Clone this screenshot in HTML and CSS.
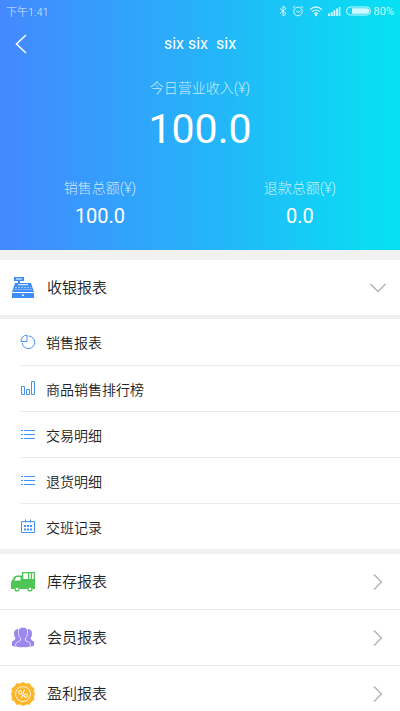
FILE: index.html
```html
<!DOCTYPE html>
<html lang="zh-CN">
<head>
<meta charset="utf-8">
<meta name="viewport" content="width=device-width, initial-scale=1">
<title>six six six</title>
<link rel="stylesheet" href="styles.css">
</head>
<body>
<div class="app">
  <header class="hero">
    <div class="status">
      <span class="time">下午1:41</span>
      <div class="indicators">
        <svg width="8" height="12" viewBox="0 0 8 12" fill="none" stroke="currentColor"><path d="M1 3.5l6 5-3 2.5V1l3 2.500-6 5"/></svg>
        <svg width="12" height="12" viewBox="0 0 12 12" fill="none" stroke="currentColor"><circle cx="6" cy="6.500" r="4.300"/><path d="M4 5.500l2 2 2.500-1.500M.8 3L3 1M11.200 3L9 1"/></svg>
        <svg width="14" height="12" viewBox="0 0 14 12" fill="none" stroke="currentColor" stroke-width="1.3"><path d="M1 4.500q6-5 12 0M3 6.700q4-3.200 8 0M5 8.800q2-1.600 4 0"/><circle cx="7" cy="10" r=".6" fill="currentColor"/></svg>
        <svg width="13" height="12" viewBox="0 0 13 12" fill="currentColor"><path d="M0 8.500h2V11H0zM2.700 7h2v4h-2zM5.400 5.300h2V11h-2zM8.100 3.600h2V11h-2zM10.800 2h1.600v9h-1.600z"/></svg>
        <svg width="25" height="12" viewBox="0 0 25 12"><rect x=".5" y="2" width="24" height="8" rx="4" fill="none" stroke="currentColor"/><path d="M6 3.200h14.500a2.800 2.800 0 0 1 0 5.600H6z" fill="currentColor"/></svg>
        <span class="battery">80%</span>
      </div>
    </div>
    <div class="titlebar">
      <button class="back" type="button" aria-label="返回"><svg width="12" height="20" viewBox="0 0 12 20" fill="none" stroke="currentColor" stroke-width="1.5"><path d="M11 1L1.500 10 11 19"/></svg></button>
      <h1 class="title">six six&nbsp; six</h1>
    </div>
    <div class="today">
      <div class="label">今日营业收入(¥)</div>
      <div class="amount">100.0</div>
    </div>
    <div class="totals">
      <div class="total"><div class="label">销售总额(¥)</div><div class="value">100.0</div></div>
      <div class="total"><div class="label">退款总额(¥)</div><div class="value">0.0</div></div>
    </div>
  </header>
  <main class="menu">
    <button class="row" type="button" aria-expanded="true">
      <svg class="icon blue" width="24" height="24" viewBox="0 0 24 24" fill="currentColor"><path fill-rule="evenodd" d="M3 1h10v4H9v2h11l3 9H1L4 7h3V5H3zM5 2.400v1h6v-1zM7 8.300v1h10v-1z"/><path d="M1 17h22v5H1z"/><path d="M4 11.500h16M3.500 13.500h17" fill="none" stroke="#fff" stroke-opacity=".5" stroke-dasharray="2 1"/><path d="M11 18.500h2V20h-2z" fill="#fff"/></svg>
      <span class="name">收银报表</span>
      <svg class="chevron" width="18" height="18" viewBox="0 0 18 18"><path d="M1.500 5L9 12.500 16.500 5"/></svg>
    </button>
    <nav class="sub">
      <a class="item" href="#sales"><svg class="small" width="16" height="16" viewBox="0 0 16 16"><path d="M8.500 2A6.300 6.300 0 1 1 2.200 9M7 1v6.500H1A6.300 6.300 0 0 1 7 1z"/></svg><span>销售报表</span></a>
      <a class="item" href="#ranking"><svg class="small" width="16" height="16" viewBox="0 0 16 16"><path d="M1.500 5.500h3v8h-3zM6.500 8.500h3v5h-3zM11.500 .5h3v13h-3z"/></svg><span>商品销售排行榜</span></a>
      <a class="item" href="#trades"><svg class="small" width="16" height="16" viewBox="0 0 16 16"><path d="M4 3.500h11M4 7.500h11M4 11.500h11M1 3.500h2M1 7.500h2M1 11.500h2"/></svg><span>交易明细</span></a>
      <a class="item" href="#returns"><svg class="small" width="16" height="16" viewBox="0 0 16 16"><path d="M4 3.500h11M4 7.500h11M4 11.500h11M1 3.500h2M1 7.500h2M1 11.500h2"/></svg><span>退货明细</span></a>
      <a class="item" href="#shifts"><svg class="small" width="16" height="16" viewBox="0 0 16 16"><path d="M1.500 2.500h13v11h-13zM5.500 .5v3M10.500 .5v3"/><path stroke-width="2" stroke-dasharray="2 1" d="M4 7h8M4 10.500h8"/></svg><span>交班记录</span></a>
    </nav>
    <button class="row" type="button">
      <svg class="icon green" width="24" height="24" viewBox="0 0 24 24" fill="currentColor"><path fill-rule="evenodd" d="M11 2h13v17h-2.200a3 3 0 0 0-5.600 0H8.800a3 3 0 0 0-5.600 0H0v-7l3-5q1-1.500 3-1.500h5zM12.300 3.300V9H17V3.300zM18.300 3.300V9h1.500V3.300zM21 3.300V9h1.700V3.300zM5.500 7L3 10.500h6.500V7z"/><circle cx="6" cy="19" r="2.600"/><circle cx="19" cy="19" r="2.600"/><circle cx="6" cy="19" r="1.300" fill="#fff"/><circle cx="19" cy="19" r="1.300" fill="#fff"/></svg>
      <span class="name">库存报表</span>
      <svg class="chevron" width="18" height="18" viewBox="0 0 18 18"><path d="M5 1.500L12.500 9 5 16.500"/></svg>
    </button>
    <button class="row" type="button">
      <svg class="icon purple" width="24" height="24" viewBox="0 0 24 24" fill="currentColor"><path d="M7.500 3Q3 3 3 7.500q0 3 1.500 5L3 14.500l-2 1V19q0 1.500 5 1.500L10 15zM16.500 3Q21 3 21 7.500q0 3-1.500 5l1.500 2 2 1V19q0 1.500-5 1.500L14 15z"/><path stroke="#fff" stroke-width=".7" d="M12 1.300c-3.800 0-5 2.700-4.500 6 .2 2.500 1 3.800 2.200 5.200v1.800c-1.700 1.500-4.700 1.400-5.200 4.200-.4 2.700 1.500 3 7.500 3s7.900-.3 7.500-3c-.5-2.800-3.500-2.700-5.200-4.200v-1.800c1.200-1.400 2-2.700 2.200-5.200.5-3.300-.7-6-4.500-6z"/></svg>
      <span class="name">会员报表</span>
      <svg class="chevron" width="18" height="18" viewBox="0 0 18 18"><path d="M5 1.500L12.500 9 5 16.500"/></svg>
    </button>
    <button class="row" type="button">
      <svg class="icon orange" width="24" height="24" viewBox="0 0 24 24" fill="currentColor"><path d="M12 0l3 1.500 3.700-.3 1.700 3 3 2-.4 3.300L24 12l-1 2.500.4 3.300-3 2-1.700 3-3.700-.3L12 24l-3-1.500-3.700.3-1.700-3-3-2L1 14.500 0 12l1-2.500L.6 6.200l3-2 1.700-3L9 1.500z"/><g fill="none" stroke="#fff"><circle cx="12" cy="12" r="7.500" stroke-width=".8"/><circle cx="9.200" cy="10.300" r="1.700"/><circle cx="14.800" cy="13.700" r="1.700"/><path d="M13.500 7.500l-3 9"/></g></svg>
      <span class="name">盈利报表</span>
      <svg class="chevron" width="18" height="18" viewBox="0 0 18 18"><path d="M5 1.500L12.500 9 5 16.500"/></svg>
    </button>
  </main>
</div>
</body>
</html>
```
FILE: styles.css
```css
* { box-sizing: border-box; }

body {
  margin: 0;
  background: #fff;
  color: #222;
  font-family: Roboto, "Noto Sans CJK SC", sans-serif;
}

svg { display: block; flex: none; }

button {
  margin: 0;
  border: 0;
  background: none;
  color: inherit;
  font: inherit;
  text-align: left;
}

.app {
  display: flex;
  flex-direction: column;
  height: 100vh;
}

.hero {
  flex: none;
  padding-bottom: 18px;
  background: linear-gradient(90deg, #4488ff, #26b2f9 50%, #06e2f2);
  color: #fff;
  text-align: center;
}

.status {
  display: flex;
  align-items: center;
  justify-content: space-between;
  height: 22px;
  padding: 0 6px;
  font-size: 11px;
  color: rgba(255, 255, 255, 0.8);
}

.time { font-weight: 300; }

.indicators {
  display: flex;
  align-items: center;
  gap: 5px;
}

.battery { margin-left: -2px; }

.titlebar {
  display: grid;
  grid-template-columns: 44px 1fr 44px;
  align-items: center;
  height: 44px;
}

.back { padding: 8px 15px; }

.title {
  margin: 0;
  font-size: 16px;
  font-weight: 400;
  line-height: 24px;
}

.today { padding-top: 10px; }

.label {
  font-size: 14px;
  font-weight: 300;
  line-height: 24px;
  color: rgba(255, 255, 255, 0.75);
}

.amount {
  font-size: 41px;
  line-height: 58px;
}

.totals {
  display: grid;
  grid-template-columns: 1fr 1fr;
  padding-top: 18px;
}

.value {
  font-size: 20px;
  line-height: 32px;
}

.menu {
  flex: 1;
  min-height: 0;
  overflow-y: auto;
  scrollbar-width: none;
  border-top: 10px solid #f1f1f1;
}

.row {
  display: flex;
  align-items: center;
  gap: 12px;
  width: 100%;
  height: 56px;
  padding: 0 13px 0 11px;
  border-bottom: 1px solid #ebebeb;
}

.name {
  flex: 1;
  font-size: 15px;
  font-weight: 350;
  line-height: 24px;
}

.chevron {
  fill: none;
  stroke: #b5b5b5;
  stroke-width: 1.5;
}

.sub {
  border-top: 3px solid #f1f1f1;
  border-bottom: 5px solid #f1f1f1;
}

.item {
  display: flex;
  align-items: center;
  gap: 10px;
  height: 46px;
  margin-left: 20px;
  color: inherit;
  font-size: 14px;
  font-weight: 350;
  text-decoration: none;
}

.item + .item { border-top: 1px solid #ebebeb; }

.small {
  fill: none;
  stroke: #4492f7;
}

.blue { color: #3d8ef8; }
.green { color: #4fc556; }
.purple { color: #9b87ee; }
.orange { color: #fcb62b; }
```
